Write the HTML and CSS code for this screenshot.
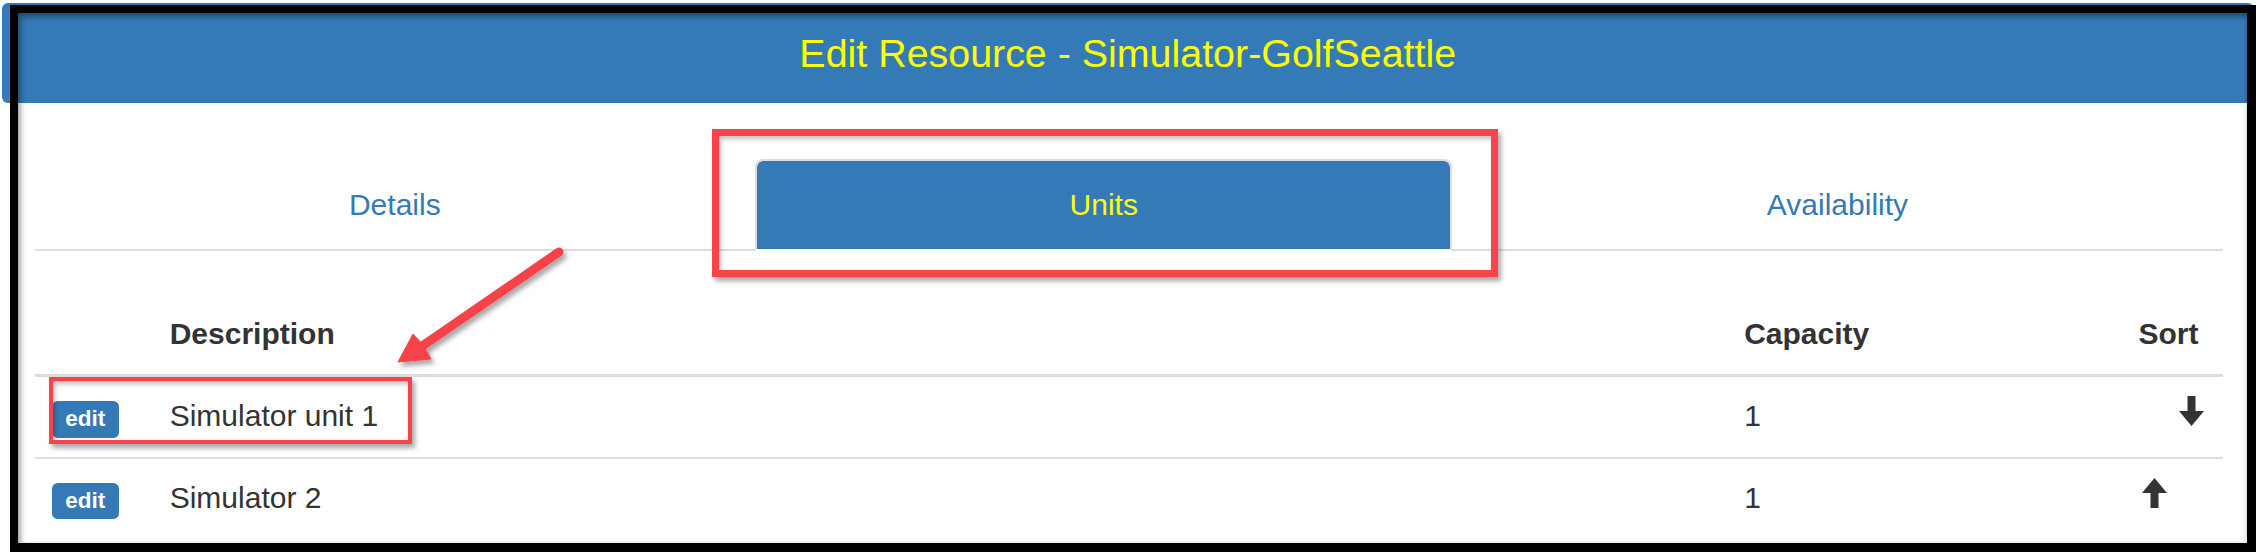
FILE: index.html
```html
<!DOCTYPE html>
<html lang="en">
<head>
    <meta charset="UTF-8">
    <meta name="viewport" content="width=device-width, initial-scale=1.0">
    <title>Edit Resource</title>
    <link rel="stylesheet" href="styles.css">
</head>
<body>
    <div class="page">
        <div class="panel">
            <div class="panel-heading">
                <h3 class="panel-title">Edit Resource - Simulator-GolfSeattle</h3>
            </div>
            <div class="panel-body">
                <ul class="tabs">
                    <li><a href="#">Details</a></li>
                    <li class="active"><a href="#">Units</a></li>
                    <li><a href="#">Availability</a></li>
                </ul>
                <table class="units">
                    <colgroup>
                        <col class="col-edit">
                        <col>
                        <col class="col-capacity">
                        <col class="col-sort">
                    </colgroup>
                    <thead>
                        <tr>
                            <th></th>
                            <th>Description</th>
                            <th>Capacity</th>
                            <th class="sort">Sort</th>
                        </tr>
                    </thead>
                    <tbody>
                        <tr>
                            <td><a href="#" class="edit">edit</a></td>
                            <td>Simulator unit 1</td>
                            <td>1</td>
                            <td class="sort">
                                <div class="sorter">
                                    <span class="move"></span>
                                    <span class="move">
                                        <svg viewBox="0 0 25 30" width="25" height="30"><path d="M8.5 0h8v15h8.5L12.5 30 0 15h8.5z"/></svg>
                                    </span>
                                </div>
                            </td>
                        </tr>
                        <tr>
                            <td><a href="#" class="edit">edit</a></td>
                            <td>Simulator 2</td>
                            <td>1</td>
                            <td class="sort">
                                <div class="sorter">
                                    <span class="move">
                                        <svg viewBox="0 0 25 30" width="25" height="30"><path d="M12.5 0 25 15h-8.5v15h-8V15H0z"/></svg>
                                    </span>
                                    <span class="move"></span>
                                </div>
                            </td>
                        </tr>
                    </tbody>
                </table>
            </div>
        </div>

        <!-- screenshot annotations -->
        <div class="frame"></div>
        <div class="callout callout-tab"></div>
        <div class="callout callout-row"></div>
        <svg class="pointer" width="2256" height="552" viewBox="0 0 2256 552">
            <defs>
                <filter id="shade" x="-20%" y="-20%" width="140%" height="140%">
                    <feDropShadow dx="3" dy="4" stdDeviation="2.5" flood-color="#000" flood-opacity="0.35"/>
                </filter>
            </defs>
            <g filter="url(#shade)" fill="#f8434a" stroke="#f8434a">
                <line x1="559" y1="252" x2="418" y2="349" stroke-width="9" stroke-linecap="round"/>
                <polygon points="398,362 413,334 423,345 431,359" stroke-width="1"/>
            </g>
        </svg>
    </div>
</body>
</html>
```

FILE: styles.css
```css
body {
    margin: 0;
    font-family: "Liberation Sans", Arial, sans-serif;
    color: #333;
    background-color: #fff;
    overflow: hidden;
}
.page {
    position: relative;
    width: 2256px;
    height: 552px;
    overflow: hidden;
}
.panel {
    margin: 3px 2px 0 1.5px;
}
.panel-heading {
    height: 100px;
    box-sizing: border-box;
    padding-top: 29px;
    background-color: #337ab7;
    border-radius: 6px;
}
.panel-title {
    margin: 0;
    font-size: 39.4px;
    font-weight: normal;
    line-height: 43px;
    color: #ffff00;
    text-align: center;
}
.panel-body {
    padding: 56.3px 31.5px 0 33px;
}
.tabs {
    display: flex;
    list-style-type: none;
    margin: 0;
    padding: 0;
    border-bottom: 2px solid #ddd;
}
.tabs li {
    flex: 1 1 auto;
}
.tabs a {
    display: block;
    margin-bottom: -2px;
    padding: 22.5px 16px;
    border: 2px solid transparent;
    border-radius: 8px 8px 0 0;
    font-size: 30px;
    line-height: 42.9px;
    color: #337ab7;
    text-align: center;
    text-decoration: none;
}
.tabs .active a {
    background-color: #337ab7;
    background-clip: padding-box;
    border-color: #ddd #ddd #fff;
    color: #ffff00;
}
.units {
    width: 100%;
    margin-top: 45.8px;
    border-collapse: separate;
    border-spacing: 0;
    table-layout: fixed;
    font-size: 30px;
    line-height: 42.9px;
}
.col-edit {
    width: 118px;
}
.col-capacity {
    width: 330px;
}
.col-sort {
    width: 165.5px;
}
.units th {
    padding: 15.8px 17.2px 18.6px;
    border-bottom: 3.5px solid #ddd;
    text-align: left;
    font-weight: bold;
    vertical-align: bottom;
}
.units td {
    padding: 17.5px 17.2px 19.3px;
    vertical-align: top;
    white-space: nowrap;
}
.units tbody tr + tr td {
    border-top: 2px solid #ddd;
}
.units th.sort {
    text-align: right;
    padding-right: 24px;
}
.units td.sort {
    padding-right: 19px;
}
.sorter {
    display: flex;
    justify-content: flex-end;
    align-items: flex-start;
    gap: 12px;
    height: 42.9px;
}
.move {
    width: 25px;
    height: 30px;
    margin-top: 1.4px;
    fill: #333;
}
.move svg {
    display: block;
}
.edit {
    padding: 4.5px 13.5px 6.75px;
    border-radius: 5.6px;
    background-color: #337ab7;
    color: #fff;
    font-size: 22.5px;
    font-weight: bold;
    line-height: 1;
    text-decoration: none;
}

/* annotations drawn over the screenshot */
.frame {
    position: absolute;
    left: 10px;
    top: 5px;
    right: 0;
    bottom: 0;
    border-style: solid;
    border-color: #000;
    border-width: 8px 9px 9px 8px;
    box-shadow: inset 2px 3px 6px rgba(0, 0, 0, 0.45);
}
.callout {
    position: absolute;
    box-sizing: border-box;
    border: solid #f8434a;
    box-shadow: 3px 4px 5px rgba(0, 0, 0, 0.35), inset 2px 3px 5px rgba(0, 0, 0, 0.25);
}
.callout-tab {
    left: 712px;
    top: 129px;
    width: 786px;
    height: 148px;
    border-width: 7px;
}
.callout-row {
    left: 49px;
    top: 377px;
    width: 363px;
    height: 67px;
    border-width: 4px;
}
.pointer {
    position: absolute;
    left: 0;
    top: 0;
    pointer-events: none;
}
```
